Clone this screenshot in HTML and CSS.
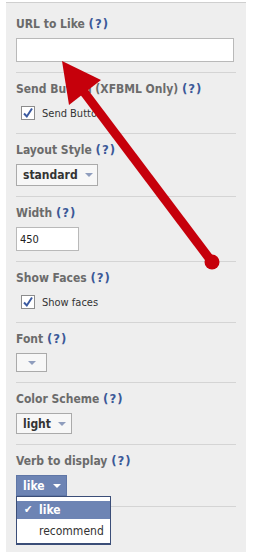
FILE: index.html
```html
<!DOCTYPE html>
<html lang="en">
<head>
    <meta charset="UTF-8">
    <meta name="viewport" content="width=device-width, initial-scale=1.0">
    <title>Like Button</title>
    <link rel="stylesheet" href="styles.css">
</head>
<body>
    <div class="panel">
        <div class="field">
            <div class="label">URL to Like <span class="help">(?)</span></div>
            <input type="text" class="url-input">
        </div>
        <div class="field">
            <div class="label">Send Button (XFBML Only) <span class="help">(?)</span></div>
            <div class="check-row">
                <span class="checkbox"><svg width="12" height="12" viewBox="0 0 12 12"><path d="M2 6.5 L4.8 9.5 L10 1.5" fill="none" stroke="#3b5aa0" stroke-width="2"/></svg></span>
                <span>Send Button</span>
            </div>
        </div>
        <div class="field">
            <div class="label">Layout Style <span class="help">(?)</span></div>
            <div class="select select-layout">standard <span class="caret"></span></div>
        </div>
        <div class="field">
            <div class="label">Width <span class="help">(?)</span></div>
            <input type="text" class="width-input" value="450">
        </div>
        <div class="field">
            <div class="label">Show Faces <span class="help">(?)</span></div>
            <div class="check-row">
                <span class="checkbox"><svg width="12" height="12" viewBox="0 0 12 12"><path d="M2 6.5 L4.8 9.5 L10 1.5" fill="none" stroke="#3b5aa0" stroke-width="2"/></svg></span>
                <span>Show faces</span>
            </div>
        </div>
        <div class="field">
            <div class="label">Font <span class="help">(?)</span></div>
            <div class="select select-font"><span class="caret"></span></div>
        </div>
        <div class="field">
            <div class="label">Color Scheme <span class="help">(?)</span></div>
            <div class="select select-color">light <span class="caret"></span></div>
        </div>
        <div class="field last">
            <div class="label">Verb to display <span class="help">(?)</span></div>
            <div class="dropdown">
                <div class="select select-verb">like <span class="caret caret-white"></span></div>
                <ul class="menu">
                    <li class="menu-item active"><span class="tick">✔</span>like</li>
                    <li class="menu-item">recommend</li>
                </ul>
            </div>
        </div>
    </div>

    <svg class="arrow" width="254" height="559" viewBox="0 0 254 559">
        <line x1="84" y1="92" x2="212" y2="262" stroke="#c6000b" stroke-width="9"/>
        <circle cx="212" cy="262" r="7.5" fill="#c6000b"/>
        <polygon points="62,61 101,80 69,105" fill="#c6000b"/>
    </svg>
</body>
</html>
```

FILE: styles.css
```css
body {
    margin: 0;
    padding: 0;
    background: #fff;
    font-family: 'DejaVu Sans Condensed', 'DejaVu Sans', sans-serif;
    position: relative;
}
.panel {
    margin: 2px 8px 0 6px;
    width: 220px;
    background: #eeeeee;
    border-top: 1px solid #cfcfcf;
    padding: 5px 10px 45px 10px;
}
.field {
    padding: 8px 0 10px;
    border-bottom: 1px solid #d4d4d4;
}
.label {
    height: 16px;
    line-height: 16px;
    font-size: 12px;
    font-weight: bold;
    color: #6b6b6b;
    margin-bottom: 6px;
    white-space: nowrap;
}
.help {
    color: #3b5998;
    font-size: 13px;
    letter-spacing: 1px;
}
.url-input {
    display: block;
    box-sizing: border-box;
    width: 218px;
    height: 24px;
    border: 1px solid #b9b9b9;
    background: #fff;
    margin: 0;
}
.width-input {
    display: block;
    box-sizing: border-box;
    width: 63px;
    height: 24px;
    border: 1px solid #b9b9b9;
    background: #fff;
    margin: 0;
    padding: 0 3px;
    font-family: 'DejaVu Sans Condensed', 'DejaVu Sans', sans-serif;
    font-size: 11px;
    color: #222;
}
.check-row {
    height: 20px;
    display: flex;
    align-items: center;
    padding-left: 5px;
    font-size: 11px;
    color: #333;
}
.checkbox {
    box-sizing: border-box;
    width: 14px;
    height: 14px;
    border: 1px solid #8c8c8c;
    background: #fff;
    display: flex;
    align-items: center;
    justify-content: center;
    margin-right: 7px;
}
.select {
    box-sizing: border-box;
    display: inline-flex;
    align-items: center;
    height: 22px;
    padding: 0 6px;
    border: 1px solid #aaaaaa;
    background: #f7f7f7;
    font-size: 12px;
    font-weight: bold;
    color: #333;
    vertical-align: top;
}
.caret {
    width: 0;
    height: 0;
    border-left: 4px solid transparent;
    border-right: 4px solid transparent;
    border-top: 4px solid #8f9dbd;
    margin-left: 7px;
}
.select-layout {
    width: 82px;
}
.select-font {
    width: 31px;
    height: 19px;
    padding: 0 0 0 4px;
}
.select-color {
    width: 56px;
    height: 21px;
}
.dropdown {
    position: relative;
    height: 21px;
}
.select-verb {
    width: 51px;
    height: 21px;
    background: #6d84b4;
    border: 1px solid #5f76a6;
    color: #fff;
}
.caret-white {
    border-top-color: #fff;
    margin-left: 8px;
}
.menu {
    position: absolute;
    top: 21px;
    left: 0;
    width: 95px;
    box-sizing: border-box;
    margin: 0;
    padding: 4px 0 0;
    list-style: none;
    background: #fff;
    border: 1px solid #3b4e78;
    border-bottom-width: 2px;
    font-size: 12px;
    color: #333;
    z-index: 2;
}
.menu-item {
    height: 24px;
    line-height: 24px;
    padding-left: 22px;
    position: relative;
}
.menu-item.active {
    height: 18px;
    line-height: 18px;
    background: #6d84b4;
    color: #fff;
    font-weight: bold;
}
.tick {
    position: absolute;
    left: 7px;
    top: 0;
    font-size: 11px;
}
.arrow {
    position: absolute;
    top: 0;
    left: 0;
    pointer-events: none;
    z-index: 5;
}
```
